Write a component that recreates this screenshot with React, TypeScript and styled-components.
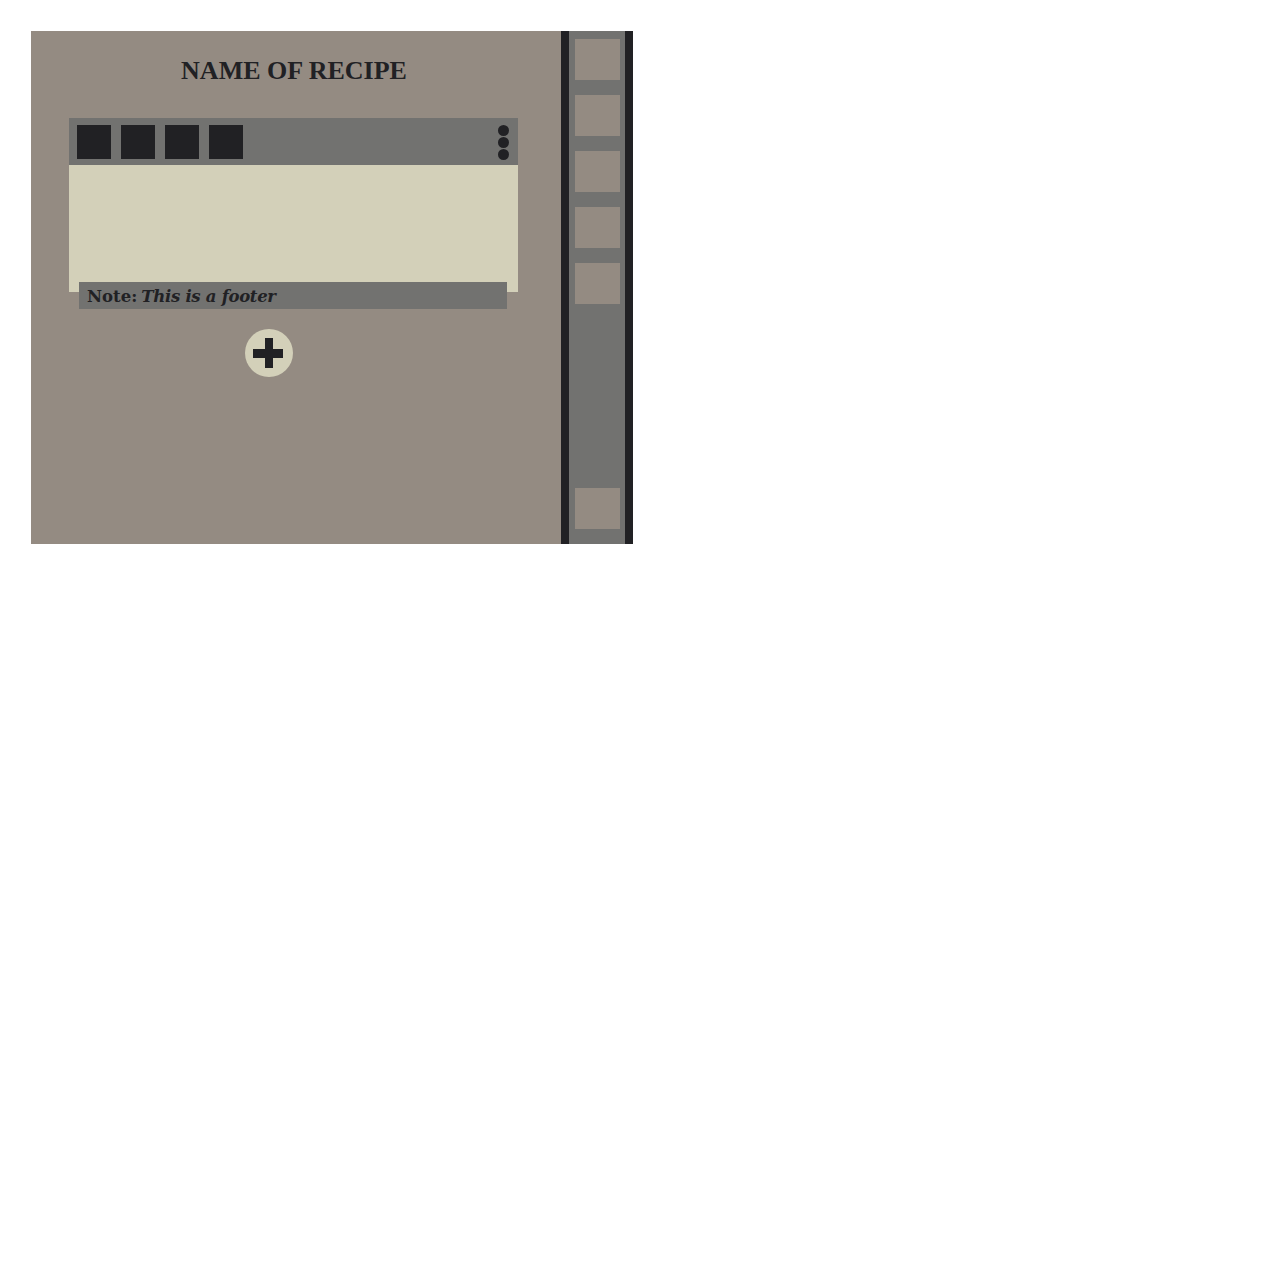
import styled, { createGlobalStyle } from "styled-components";

const GlobalStyle = createGlobalStyle`
  body {
    margin: 0;
    background: #ffffff;
    font-family: "Liberation Serif", serif;
  }
`;

const Page = styled.div`
  display: flex;
  padding: 31px;
`;

const RecipePanel = styled.main`
  display: flex;
  flex-direction: column;
  width: 530px;
  height: 513px;
  background-color: #948b82;
`;

const Title = styled.h1`
  margin: 25px 4px 32px 0;
  text-align: center;
  font-family: "Liberation Serif", serif;
  font-size: 26px;
  line-height: 30px;
  font-weight: 700;
  color: #212124;
`;

const Card = styled.section`
  margin-left: 38px;
  width: 449px;
`;

const Toolbar = styled.div`
  display: flex;
  align-items: flex-start;
  gap: 10px;
  height: 47px;
  box-sizing: border-box;
  padding: 7px 9px 6px 8px;
  background-color: #727270;
`;

const ToolButton = styled.button`
  width: 34px;
  height: 34px;
  padding: 0;
  border: none;
  background-color: #212124;
  cursor: pointer;
`;

const MoreMenu = styled.button`
  display: flex;
  flex-direction: column;
  gap: 1px;
  margin-left: auto;
  padding: 0;
  border: none;
  background: transparent;
  cursor: pointer;
`;

const Dot = styled.span`
  width: 11px;
  height: 11px;
  border-radius: 50%;
  background-color: #212124;
`;

const CardBody = styled.div`
  height: 127px;
  background-color: #d3d0b9;
`;

const Footer = styled.footer`
  display: flex;
  align-items: center;
  gap: 4px;
  height: 27px;
  margin: -10px 11px 0 10px;
  padding: 1px 0 0 8px;
  box-sizing: border-box;
  position: relative;
  background-color: #727270;
  font-family: "DejaVu Serif", serif;
  font-size: 16.5px;
  font-weight: 700;
  color: #212124;
`;

const FooterText = styled.em`
  font-style: italic;
  letter-spacing: -0.3px;
`;

const AddButton = styled.button`
  display: flex;
  align-items: center;
  justify-content: center;
  width: 48px;
  height: 48px;
  margin: 20px 0 0 214px;
  padding: 0;
  border: none;
  border-radius: 50%;
  background-color: #d3d0b9;
  cursor: pointer;
`;

const Sidebar = styled.nav`
  display: flex;
  flex-direction: column;
  gap: 15px;
  width: 45px;
  height: 490px;
  padding: 8px 5px 15px 6px;
  border-left: 8px solid #212124;
  border-right: 8px solid #212124;
  background-color: #727270;
`;

const SideItem = styled.div<{ $bottom?: boolean }>`
  width: 45px;
  height: 41px;
  flex-shrink: 0;
  background-color: #948b82;
  margin-top: ${(p) => (p.$bottom ? "auto" : "0")};
`;

export default function App() {
  return (
    <>
      <GlobalStyle />
      <Page>
        <RecipePanel>
          <Title>NAME OF RECIPE</Title>
          <Card>
            <Toolbar>
              <ToolButton />
              <ToolButton />
              <ToolButton />
              <ToolButton />
              <MoreMenu>
                <Dot />
                <Dot />
                <Dot />
              </MoreMenu>
            </Toolbar>
            <CardBody />
            <Footer>
              <span>Note:</span>
              <FooterText>This is a footer</FooterText>
            </Footer>
          </Card>
          <AddButton>
            <svg width="48" height="48" viewBox="0 0 48 48">
              <rect x="8" y="20" width="30" height="9" fill="#212124" />
              <rect x="20" y="9" width="8" height="30" fill="#212124" />
            </svg>
          </AddButton>
        </RecipePanel>
        <Sidebar>
          <SideItem />
          <SideItem />
          <SideItem />
          <SideItem />
          <SideItem />
          <SideItem $bottom />
        </Sidebar>
      </Page>
    </>
  );
}
